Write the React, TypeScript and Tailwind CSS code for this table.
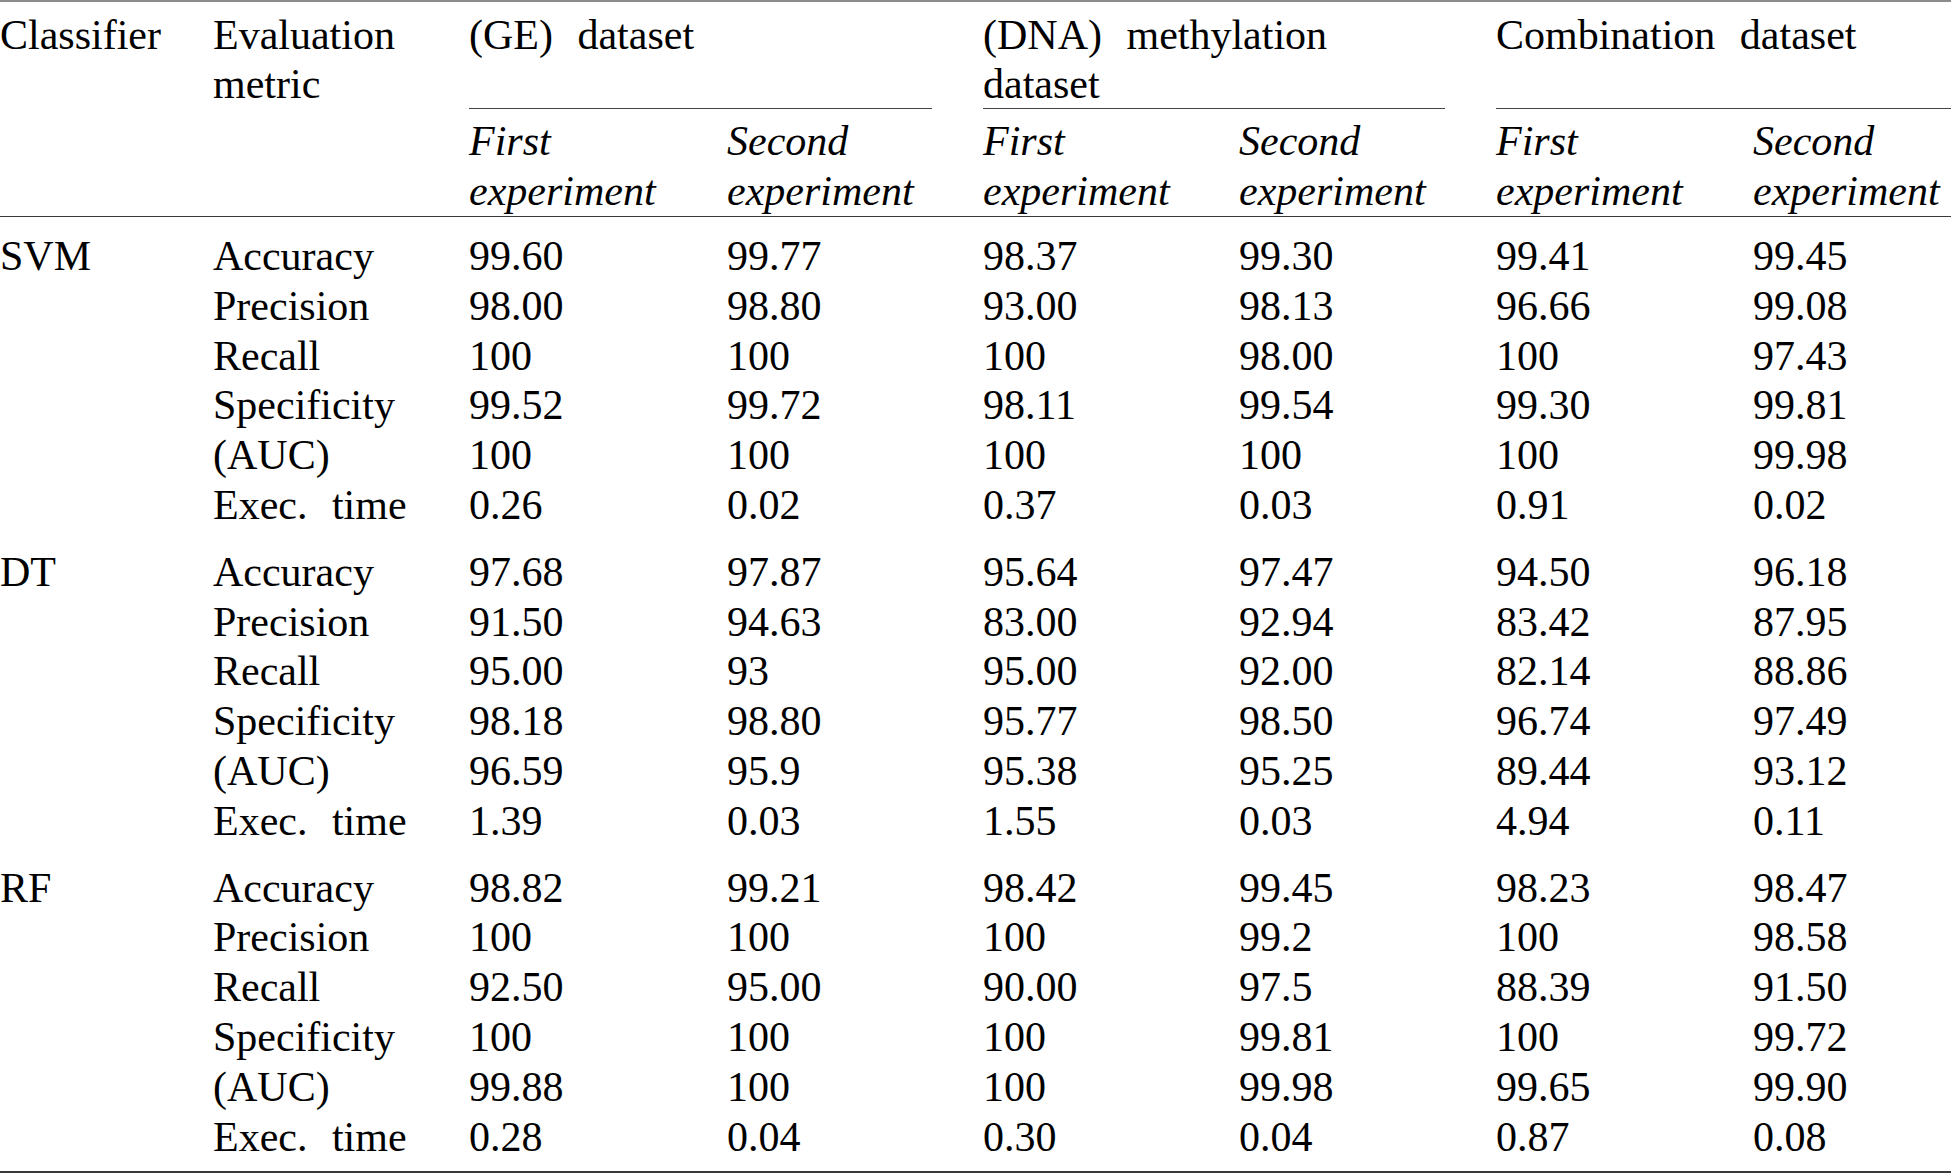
import React from "react";

type Metric = { name: string; values: string[] };
type Block = { classifier: string; rows: Metric[] };

const blocks: Block[] = [
  {
    classifier: "SVM",
    rows: [
      { name: "Accuracy", values: ["99.60", "99.77", "98.37", "99.30", "99.41", "99.45"] },
      { name: "Precision", values: ["98.00", "98.80", "93.00", "98.13", "96.66", "99.08"] },
      { name: "Recall", values: ["100", "100", "100", "98.00", "100", "97.43"] },
      { name: "Specificity", values: ["99.52", "99.72", "98.11", "99.54", "99.30", "99.81"] },
      { name: "(AUC)", values: ["100", "100", "100", "100", "100", "99.98"] },
      { name: "Exec. time", values: ["0.26", "0.02", "0.37", "0.03", "0.91", "0.02"] },
    ],
  },
  {
    classifier: "DT",
    rows: [
      { name: "Accuracy", values: ["97.68", "97.87", "95.64", "97.47", "94.50", "96.18"] },
      { name: "Precision", values: ["91.50", "94.63", "83.00", "92.94", "83.42", "87.95"] },
      { name: "Recall", values: ["95.00", "93", "95.00", "92.00", "82.14", "88.86"] },
      { name: "Specificity", values: ["98.18", "98.80", "95.77", "98.50", "96.74", "97.49"] },
      { name: "(AUC)", values: ["96.59", "95.9", "95.38", "95.25", "89.44", "93.12"] },
      { name: "Exec. time", values: ["1.39", "0.03", "1.55", "0.03", "4.94", "0.11"] },
    ],
  },
  {
    classifier: "RF",
    rows: [
      { name: "Accuracy", values: ["98.82", "99.21", "98.42", "99.45", "98.23", "98.47"] },
      { name: "Precision", values: ["100", "100", "100", "99.2", "100", "98.58"] },
      { name: "Recall", values: ["92.50", "95.00", "90.00", "97.5", "88.39", "91.50"] },
      { name: "Specificity", values: ["100", "100", "100", "99.81", "100", "99.72"] },
      { name: "(AUC)", values: ["99.88", "100", "100", "99.98", "99.65", "99.90"] },
      { name: "Exec. time", values: ["0.28", "0.04", "0.30", "0.04", "0.87", "0.08"] },
    ],
  },
];

const cols = "grid grid-cols-[213px_256px_258px_256px_256px_257px_257px_1fr]";

export default function App() {
  return (
    <div className="w-[1951px] h-[1174px] bg-white text-black font-['Liberation_Serif','Times_New_Roman',serif] text-[42px] [word-spacing:14px] overflow-hidden">
      <div className="border-t-2 border-[#8c8c8c]" />

      {/* header, first line: group titles */}
      <div className={`${cols} pt-[9px] h-[109px] leading-[49px]`}>
        <div>Classifier</div>
        <div>
          Evaluation
          <br />
          metric
        </div>
        <div className="col-span-2 pr-[51px]">
          <div className="h-[98px] border-b border-[#444]">(GE) dataset</div>
        </div>
        <div className="col-span-2 pr-[51px]">
          <div className="h-[98px] border-b border-[#444]">
            (DNA) methylation
            <br />
            dataset
          </div>
        </div>
        <div className="col-span-2">
          <div className="h-[98px] border-b border-[#444]">Combination dataset</div>
        </div>
      </div>

      {/* header, second line: experiments */}
      <div className={`${cols} pt-[5px] h-[106px] italic leading-[50px] border-b border-[#3a3a3a]`}>
        <div className="col-start-3">
          First
          <br />
          experiment
        </div>
        {["Second", "First", "Second", "First", "Second"].map((l, i) => (
          <div key={i} className="whitespace-nowrap">
            {l}
            <br />
            experiment
          </div>
        ))}
      </div>

      {/* body */}
      <div className="pt-[15px] pb-[9px] flex flex-col gap-[17px] border-b-2 border-[#3a3a3a]">
        {blocks.map((b) => (
          <div key={b.classifier} className={`${cols} leading-[49.8px]`}>
            {b.rows.map((r, i) => (
              <React.Fragment key={r.name}>
                <div>{i === 0 ? b.classifier : ""}</div>
                <div className="whitespace-nowrap">{r.name}</div>
                {r.values.map((v, j) => (
                  <div key={j}>{v}</div>
                ))}
              </React.Fragment>
            ))}
          </div>
        ))}
      </div>
    </div>
  );
}
